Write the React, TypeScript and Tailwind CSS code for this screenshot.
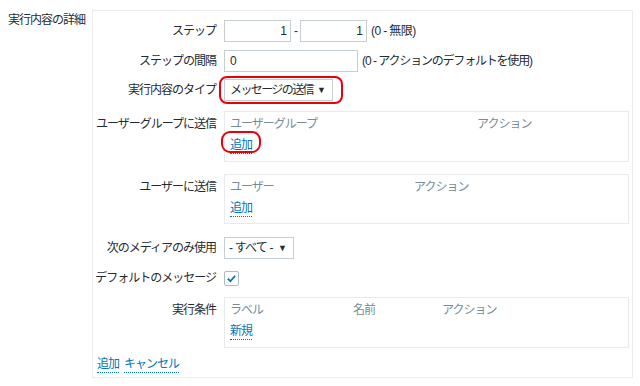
import React from "react";

const font = { fontFamily: '"Liberation Sans", "Noto Sans CJK JP", sans-serif' };

function Label({ children, top = false }: { children: React.ReactNode; top?: boolean }) {
  return (
    <div
      className={
        "w-[124px] shrink-0 text-right pr-[1px] text-[#1f2c33] " +
        (top ? "pt-[4px]" : "")
      }
    >
      {children}
    </div>
  );
}

function ActionLink({ children }: { children: React.ReactNode }) {
  return (
    <span className="text-[#0275b8] border-b border-dotted border-[#0275b8] leading-[16px] inline-block">
      {children}
    </span>
  );
}

function Arrow() {
  return <span className="text-[9px] text-[#1f2c33] leading-none tracking-normal">▼</span>;
}

function ListBox({
  cols,
  link,
  circled = false,
  h = "h-[51px]",
}: {
  cols: { title: string; w: string }[];
  link: string;
  circled?: boolean;
  h?: string;
}) {
  return (
    <div className={"w-[405px] border border-[#e6ebee] pl-[5px] pt-[3px] " + h}>
      <div className="flex text-[#768d99] h-[18px] items-center">
        {cols.map((c) => (
          <div key={c.title} className={c.w}>
            {c.title}
          </div>
        ))}
      </div>
      <div className="mt-[3px] h-[18px] flex items-center">
        <div className="relative">
          <ActionLink>{link}</ActionLink>
          {circled && (
            <div className="absolute left-[-9px] top-[-5px] w-[40px] h-[22px] border-[2.5px] border-[#e8000b] rounded-[9px]" />
          )}
        </div>
      </div>
    </div>
  );
}

export default function App() {
  return (
    <div
      className="w-[640px] h-[386px] bg-white flex text-[12px] leading-[18px] tracking-[-1px] text-[#1f2c33]"
      style={font}
    >
      <div className="w-[92px] shrink-0 pl-[8px] pt-[11px]">実行内容の詳細</div>

      <div className="mt-[10px] w-[541px] h-[368px] border border-[#ebebeb] flex flex-col">
        {/* ステップ */}
        <div className="flex items-center gap-[7px] mt-[9px] h-[22px]">
          <Label>ステップ</Label>
          <div className="flex items-center">
            <div className="w-[67px] h-[22px] border border-[#c5ced3] pr-[4px] flex items-center justify-end">
              1
            </div>
            <span className="w-[9px] text-center">-</span>
            <div className="w-[67px] h-[22px] border border-[#c5ced3] pr-[4px] flex items-center justify-end">
              1
            </div>
            <span className="ml-[4px] tracking-[-0.6px]">(0 - 無限)</span>
          </div>
        </div>

        {/* ステップの間隔 */}
        <div className="flex items-center gap-[7px] mt-[8px] h-[22px]">
          <Label>ステップの間隔</Label>
          <div className="w-[134px] h-[22px] border border-[#c5ced3] pl-[5px] flex items-center">0</div>
          <span className="ml-[-3px] tracking-[-1px]">
            (0 - <span className="tracking-[-1.2px]">アクションのデフォルトを使用</span>)
          </span>
        </div>

        {/* 実行内容のタイプ */}
        <div className="flex items-center gap-[7px] mt-[7px] h-[22px]">
          <Label>実行内容のタイプ</Label>
          <div className="relative">
            <div className="w-[109px] h-[22px] border border-[#c5ced3] pl-[5px] pr-[6px] flex items-center justify-between">
              <span className="tracking-[-1.6px]">メッセージの送信</span>
              <Arrow />
            </div>
            <div className="absolute left-[-5px] top-[-3px] w-[124px] h-[28px] border-[2.5px] border-[#e8000b] rounded-[8px]" />
          </div>
        </div>

        {/* ユーザーグループに送信 */}
        <div className="flex gap-[7px] mt-[10px]">
          <Label top>ユーザーグループに送信</Label>
          <ListBox
            cols={[
              { title: "ユーザーグループ", w: "w-[247px]" },
              { title: "アクション", w: "" },
            ]}
            link="追加"
            circled
          />
        </div>

        {/* ユーザーに送信 */}
        <div className="flex gap-[7px] mt-[12px]">
          <Label top>ユーザーに送信</Label>
          <ListBox
            cols={[
              { title: "ユーザー", w: "w-[184px]" },
              { title: "アクション", w: "" },
            ]}
            link="追加"
            h="h-[50px]"
          />
        </div>

        {/* 次のメディアのみ使用 */}
        <div className="flex items-center gap-[7px] mt-[13px] h-[22px]">
          <Label>次のメディアのみ使用</Label>
          <div className="w-[70px] h-[22px] border border-[#c5ced3] pl-[4px] pr-[6px] flex items-center justify-between">
            <span className="tracking-[-0.8px]">- すべて -</span>
            <Arrow />
          </div>
        </div>

        {/* デフォルトのメッセージ */}
        <div className="flex items-center gap-[7px] mt-[11px] h-[16px]">
          <Label>デフォルトのメッセージ</Label>
          <div className="w-[15px] h-[15px] border border-[#acbbc2] rounded-[2px] flex items-center justify-center">
            <svg width="11" height="11" viewBox="0 0 12 12">
              <path d="M2 6.2 L4.8 9 L10 3" fill="none" stroke="#0275b8" strokeWidth="2" />
            </svg>
          </div>
        </div>

        {/* 実行条件 */}
        <div className="flex gap-[7px] mt-[11px]">
          <Label top>実行条件</Label>
          <ListBox
            cols={[
              { title: "ラベル", w: "w-[123px]" },
              { title: "名前", w: "w-[89px]" },
              { title: "アクション", w: "" },
            ]}
            link="新規"
          />
        </div>

        {/* bottom */}
        <div className="flex gap-[5px] mt-[7px] pl-[4px] h-[18px] items-center">
          <ActionLink>追加</ActionLink>
          <ActionLink>キャンセル</ActionLink>
        </div>
      </div>
    </div>
  );
}
